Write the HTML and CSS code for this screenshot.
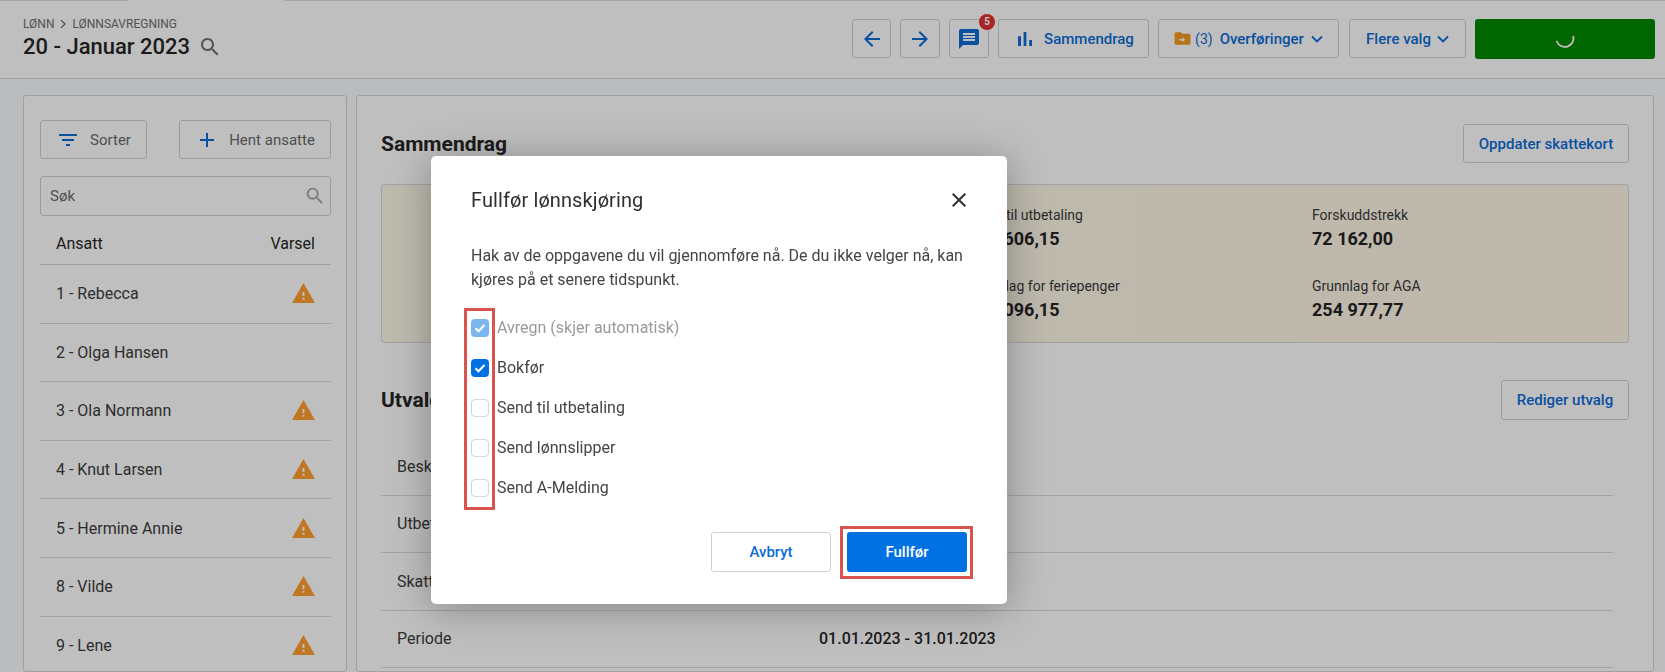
FILE: index.html
```html
<!DOCTYPE html>
<html lang="no">
<head>
<meta charset="utf-8">
<title>Lønnsavregning</title>
<link rel="stylesheet" href="styles.css">
</head>
<body>
<div class="page">
  <div class="tabstrip"><span class="tabline tabline-a"></span><span class="tabline tabline-b"></span></div>
  <header class="topbar">
    <div class="titleblock">
      <div class="crumbs"><span>LØNN</span><svg class="crumbsep" viewBox="0 0 8 10"><path d="M2 1l4 4-4 4" fill="none" stroke="currentColor" stroke-width="1.2"/></svg><span>LØNNSAVREGNING</span></div>
      <div class="title"><h1>20 - Januar 2023</h1>
        <svg class="title-search" viewBox="0 0 24 24"><path d="M15.5 14h-.79l-.28-.27C15.41 12.59 16 11.11 16 9.5 16 5.91 13.09 3 9.5 3S3 5.91 3 9.5 5.91 16 9.5 16c1.61 0 3.09-.59 4.23-1.57l.27.28v.79l5 4.99L20.49 19l-4.99-5zm-6 0C7.01 14 5 11.99 5 9.5S7.01 5 9.5 5 14 7.01 14 9.5 11.99 14 9.5 14z"/></svg>
      </div>
    </div>
    <div class="actions">
      <button class="btn icon-btn w39"><svg class="ic" viewBox="0 0 24 24"><path d="M20 11H7.83l5.59-5.59L12 4l-8 8 8 8 1.41-1.41L7.83 13H20v-2z"/></svg></button>
      <button class="btn icon-btn w40"><svg class="ic" viewBox="0 0 24 24"><path d="M12 4l-1.41 1.41L16.17 11H4v2h12.17l-5.58 5.59L12 20l8-8z"/></svg></button>
      <button class="btn icon-btn w40 chat"><svg class="ic" viewBox="0 0 24 24"><path d="M20 2H4c-1.1 0-1.99.9-1.99 2L2 22l4-4h14c1.1 0 2-.9 2-2V4c0-1.1-.9-2-2-2zm-2 12H6v-2h12v2zm0-3H6V9h12v2zm0-3H6V6h12v2z"/></svg><span class="badge">5</span></button>
      <button class="btn w151"><svg class="ic" viewBox="0 0 24 24"><path d="M5 9.2h3V19H5zM10.6 5h2.8v14h-2.8zm5.6 8H19v6h-2.8z"/></svg><span>Sammendrag</span></button>
      <button class="btn w181"><svg class="ic-folder" viewBox="0 0 24 24"><path fill="#f59a23" d="M20 6h-8l-2-2H4c-1.1 0-2 .9-2 2v12c0 1.1.9 2 2 2h16c1.1 0 2-.9 2-2V8c0-1.1-.9-2-2-2z"/><path fill="#fff" d="M12 10.5l3.5 3-3.5 3v-2H8v-2h4z"/></svg><span class="count">(3)</span><span>Overføringer</span><svg class="chev" viewBox="0 0 12 8"><path d="M1 1.5l5 5 5-5" fill="none" stroke="currentColor" stroke-width="1.8"/></svg></button>
      <button class="btn w117"><span>Flere valg</span><svg class="chev" viewBox="0 0 12 8"><path d="M1 1.5l5 5 5-5" fill="none" stroke="currentColor" stroke-width="1.8"/></svg></button>
      <button class="btn-green"><svg class="spinner" viewBox="0 0 20 20"><path d="M1.8 12.5A8.7 8.7 0 0 0 18.4 7.6" fill="none" stroke="#fff" stroke-width="1.8" stroke-linecap="round"/></svg></button>
    </div>
  </header>

  <main class="content">
    <aside class="sidebar">
      <div class="side-actions">
        <button class="btn side-btn sort"><svg class="ic" viewBox="0 0 24 24"><path d="M10 18h4v-2h-4v2zM3 6v2h18V6H3zm3 7h12v-2H6v2z"/></svg><span>Sorter</span></button>
        <button class="btn side-btn fetch"><svg class="ic" viewBox="0 0 24 24"><path d="M19 13h-6v6h-2v-6H5v-2h6V5h2v6h6v2z"/></svg><span>Hent ansatte</span></button>
      </div>
      <div class="searchbox"><span>Søk</span><svg class="search-ic" viewBox="0 0 24 24"><path d="M15.5 14h-.79l-.28-.27C15.41 12.59 16 11.11 16 9.5 16 5.91 13.09 3 9.5 3S3 5.91 3 9.5 5.91 16 9.5 16c1.61 0 3.09-.59 4.23-1.57l.27.28v.79l5 4.99L20.49 19l-4.99-5zm-6 0C7.01 14 5 11.99 5 9.5S7.01 5 9.5 5 14 7.01 14 9.5 11.99 14 9.5 14z"/></svg></div>
      <div class="list-head"><span>Ansatt</span><span>Varsel</span></div>
      <ul class="emp-list">
        <li><span>1 - Rebecca</span><svg class="warn" viewBox="0 0 24 22"><path d="M12 0L0 21h24L12 0zm1 17.5h-2v-2h2v2zm0-4h-2v-4h2v4z"/></svg></li>
        <li><span>2 - Olga Hansen</span></li>
        <li><span>3 - Ola Normann</span><svg class="warn" viewBox="0 0 24 22"><path d="M12 0L0 21h24L12 0zm1 17.5h-2v-2h2v2zm0-4h-2v-4h2v4z"/></svg></li>
        <li><span>4 - Knut Larsen</span><svg class="warn" viewBox="0 0 24 22"><path d="M12 0L0 21h24L12 0zm1 17.5h-2v-2h2v2zm0-4h-2v-4h2v4z"/></svg></li>
        <li><span>5 - Hermine Annie</span><svg class="warn" viewBox="0 0 24 22"><path d="M12 0L0 21h24L12 0zm1 17.5h-2v-2h2v2zm0-4h-2v-4h2v4z"/></svg></li>
        <li><span>8 - Vilde</span><svg class="warn" viewBox="0 0 24 22"><path d="M12 0L0 21h24L12 0zm1 17.5h-2v-2h2v2zm0-4h-2v-4h2v4z"/></svg></li>
        <li><span>9 - Lene</span><svg class="warn" viewBox="0 0 24 22"><path d="M12 0L0 21h24L12 0zm1 17.5h-2v-2h2v2zm0-4h-2v-4h2v4z"/></svg></li>
      </ul>
    </aside>

    <section class="detail">
      <div class="sec-head"><h2>Sammendrag</h2><button class="btn plain w166">Oppdater skattekort</button></div>
      <div class="summary">
        <div></div>
        <div class="stat"><span class="stat-label">Netto til utbetaling</span><strong>182 606,15</strong></div>
        <div class="stat"><span class="stat-label">Forskuddstrekk</span><strong>72 162,00</strong></div>
        <div></div>
        <div class="stat"><span class="stat-label">Grunnlag for feriepenger</span><strong>254 096,15</strong></div>
        <div class="stat"><span class="stat-label">Grunnlag for AGA</span><strong>254 977,77</strong></div>
      </div>
      <div class="sec-head sec-two"><h2>Utvalg</h2><button class="btn plain w128">Rediger utvalg</button></div>
      <div class="rows">
        <div class="row"><span>Beskrivelse</span></div>
        <div class="row"><span>Utbetalingsdato</span></div>
        <div class="row"><span>Skatteperiode</span></div>
        <div class="row"><span>Periode</span><b>01.01.2023 - 31.01.2023</b></div>
      </div>
    </section>
  </main>
</div>

<div class="overlay"></div>

<div class="modal">
  <div class="modal-head"><h3>Fullfør lønnskjøring</h3>
    <svg class="close" viewBox="0 0 24 24"><path d="M19 6.41L17.59 5 12 10.59 6.41 5 5 6.41 10.59 12 5 17.59 6.41 19 12 13.41 17.59 19 19 17.59 13.41 12z"/></svg>
  </div>
  <p class="modal-text">Hak av de oppgavene du vil gjennomføre nå. De du ikke velger nå, kan kjøres på et senere tidspunkt.</p>
  <div class="checks">
    <div class="check disabled"><span class="box on"><svg viewBox="0 0 18 18"><path d="M4.5 9.3l3 3 6-6.3" fill="none" stroke="#fff" stroke-width="2"/></svg></span><span class="check-label">Avregn (skjer automatisk)</span></div>
    <div class="check"><span class="box on"><svg viewBox="0 0 18 18"><path d="M4.5 9.3l3 3 6-6.3" fill="none" stroke="#fff" stroke-width="2"/></svg></span><span class="check-label">Bokfør</span></div>
    <div class="check"><span class="box"></span><span class="check-label">Send til utbetaling</span></div>
    <div class="check"><span class="box"></span><span class="check-label">Send lønnslipper</span></div>
    <div class="check"><span class="box"></span><span class="check-label">Send A-Melding</span></div>
    <span class="mark mark-checks"></span>
  </div>
  <div class="modal-actions">
    <button class="m-btn cancel">Avbryt</button>
    <button class="m-btn primary">Fullfør<span class="mark mark-primary"></span></button>
  </div>
</div>
</body>
</html>
```

FILE: styles.css
```css
* { box-sizing: border-box; }
html, body { margin: 0; padding: 0; height: 100%; overflow: hidden; }
body { font-family: Roboto, "Liberation Sans", sans-serif; color: #212121; background: #fafbfd; }
h1, h2, h3, p, ul { margin: 0; padding: 0; }
button { font-family: inherit; }

.page { display: flex; flex-direction: column; height: 672px; overflow: hidden; }

.tabstrip { display: flex; justify-content: space-between; height: 1px; background: #fff; flex: none; }
.tabline { height: 1px; background: #dcdcdc; }
.tabline-a { width: 128px; }
.tabline-b { width: 1381px; }

.topbar { display: flex; justify-content: space-between; align-items: flex-start; height: 78px; background: #fff; border-bottom: 1px solid #d4d6d8; padding: 18px 10px 0 23px; flex: none; }
.titleblock { display: flex; flex-direction: column; }
.crumbs { display: flex; align-items: center; gap: 5px; font-size: 12px; line-height: 12px; color: #6e6e6e; margin-top: -1px; }
.crumbsep { width: 8px; height: 10px; }
.title { display: flex; align-items: center; gap: 8px; margin-top: 3px; }
h1 { font-size: 22px; font-weight: 500; line-height: 28px; color: #262626; }
.title-search { width: 24px; height: 24px; fill: #6f6f6f; }

.actions { display: flex; align-items: flex-start; gap: 9px; }
.btn { display: flex; align-items: center; justify-content: center; height: 39px; background: #fff; border: 1px solid #cfd1d4; border-radius: 3px; color: #0c6cd6; font-size: 15px; font-weight: 500; padding: 0; gap: 8px; }
.ic { width: 24px; height: 24px; fill: #0c6cd6; flex: none; }
.w39 { width: 39px; }
.w40 { width: 40px; }
.w151 { width: 151px; gap: 7px; }
.w181 { width: 181px; gap: 6px; margin-right: 1px; padding-right: 1px; }
.w117 { width: 117px; gap: 5px; }
.w166 { width: 166px; }
.w128 { width: 128px; }
.chat { position: relative; }
.badge { position: absolute; top: -6px; right: -7px; width: 16px; height: 16px; border-radius: 50%; background: #e23030; color: #fff; font-size: 10px; font-weight: 700; line-height: 16px; text-align: center; }
.ic-folder { width: 19px; height: 19px; flex: none; }
.count { font-size: 14px; font-weight: 400; margin-left: -3px; margin-right: 1px; }
.chev { width: 12px; height: 8px; margin-left: 1px; flex: none; }
.btn-green { width: 180px; height: 40px; border: 0; border-radius: 3px; background: #008a00; display: flex; align-items: center; justify-content: center; padding: 0; }
.spinner { width: 20px; height: 20px; }

.content { display: flex; flex: 1; min-height: 0; padding: 16px 11px 0 23px; gap: 9px; background: #f9fbfe; }

.sidebar { width: 324px; flex: none; background: #fff; border: 1px solid #d4d6d8; border-radius: 3px; padding: 24px 15px 0 16px; }
.side-actions { display: flex; justify-content: space-between; }
.side-btn { color: #6a6a6a; font-weight: 400; font-size: 15px; gap: 10px; }
.sort { width: 107px; }
.fetch { width: 152px; }
.searchbox { display: flex; justify-content: space-between; align-items: center; height: 40px; margin-top: 17px; border: 1px solid #cfd1d4; border-radius: 3px; padding: 0 4px 0 9px; font-size: 15px; color: #6a6a6a; }
.search-ic { width: 22px; height: 22px; fill: #a8a8a8; }
.list-head { display: flex; justify-content: space-between; align-items: center; height: 49px; padding: 6px 16px 0; font-size: 16px; color: #262626; border-bottom: 1px solid #d4d6d8; }
.emp-list { list-style: none; }
.emp-list li { display: flex; justify-content: space-between; align-items: center; height: 58.6px; padding: 0 16px; font-size: 16px; color: #3c3c3c; border-bottom: 1px solid #d9dadc; }
.warn { width: 23px; height: 21px; fill: #ff9f2e; }

.detail { flex: 1; background: #fff; border: 1px solid #d4d6d8; border-radius: 3px; padding: 28px 24px 0; min-width: 0; }
.sec-head { display: flex; justify-content: space-between; align-items: center; }
h2 { font-size: 21px; font-weight: 700; color: #262626; }
.plain { font-size: 15px; }
.summary { display: grid; grid-template-columns: 1fr 344px 316px; grid-auto-rows: 71px; align-content: start; margin-top: 21px; height: 159px; padding-top: 20px; background: linear-gradient(90deg, #fdf9e8, #fff6e6); border: 1px solid #d8d8d8; border-radius: 3px; }
.stat { display: flex; flex-direction: column; gap: 2px; }
.stat-label { font-size: 14px; line-height: 20px; color: #3a3a3a; }
.stat strong { font-size: 18px; line-height: 24px; font-weight: 700; color: #242424; }
.sec-two { margin-top: 37px; }
.sec-two .btn { height: 40px; }
.rows { margin-top: 18px; width: 1232px; }
.row { display: flex; align-items: center; height: 57.5px; padding-left: 16px; font-size: 16px; color: #3c3c3c; border-bottom: 1px solid #d9dadc; }
.row span { width: 422px; flex: none; }
.row b { font-weight: 500; color: #262626; }

.overlay { position: fixed; inset: 0; background: rgba(0, 0, 0, 0.25); }

.modal { position: absolute; left: 431px; top: 156px; width: 576px; height: 448px; background: #fff; border-radius: 5px; padding: 30px 40px 32px; box-shadow: 0 4px 40px rgba(0, 0, 0, 0.3); display: flex; flex-direction: column; }
.modal-head { display: flex; justify-content: space-between; align-items: center; height: 28px; }
h3 { font-size: 20px; font-weight: 400; letter-spacing: 0.1px; color: #2f2f2f; }
.close { width: 24px; height: 24px; fill: #333; margin-right: -4px; }
.modal-text { margin-top: 30px; font-size: 16px; line-height: 24px; color: #444; }
.checks { position: relative; margin-top: 16px; }
.check { display: flex; align-items: center; gap: 8px; height: 40px; font-size: 16px; color: #444; }
.check-label { padding-bottom: 2px; }
.check.disabled { color: #9a9a9a; }
.box { width: 18px; height: 18px; border: 1px solid #d4d6d8; border-radius: 4px; background: #fff; flex: none; display: block; }
.box svg { display: block; width: 18px; height: 18px; }
.box.on { background: #0071e3; border: 0; }
.disabled .box.on { background: #7ab5ee; }

.mark { position: absolute; border: 3px solid #d9534f; pointer-events: none; }
.mark-checks { left: -7px; top: 0; width: 31px; height: 202px; }
.mark-primary { left: -7px; top: -6px; width: 133px; height: 53px; }

.modal-actions { display: flex; justify-content: flex-end; gap: 16px; margin-top: 24px; }
.m-btn { position: relative; width: 120px; height: 40px; border-radius: 3px; font-size: 15px; font-weight: 500; padding: 0; }
.cancel { background: #fff; border: 1px solid #cfd1d4; color: #0c6cd6; }
.primary { background: #0071e3; border: 0; color: #fff; }
```
